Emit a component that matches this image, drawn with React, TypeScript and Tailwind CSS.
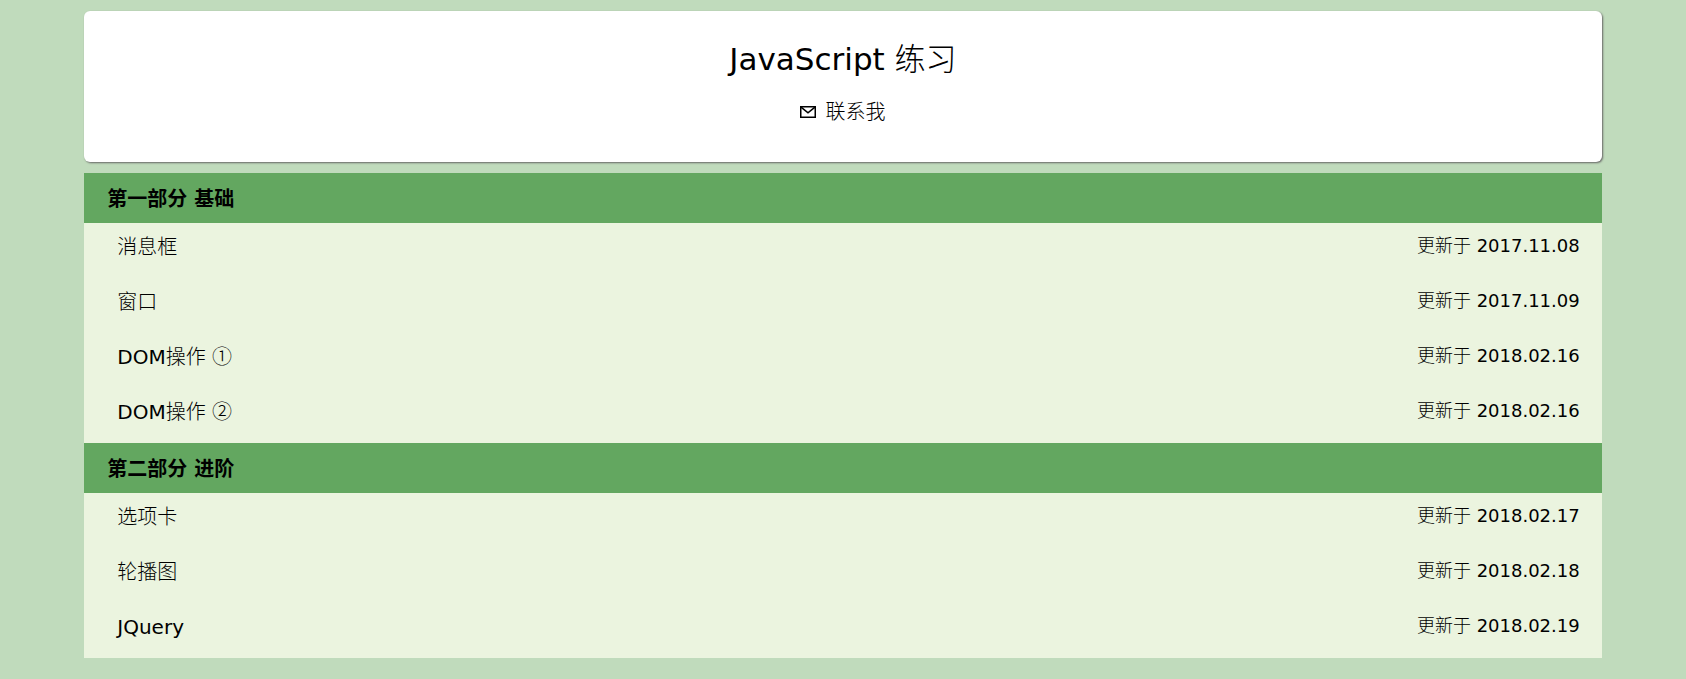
type Item = { title: string; mark?: string; date: string };
type Section = { heading: string; items: Item[] };

const sections: Section[] = [
  {
    heading: '第一部分 基础',
    items: [
      { title: '消息框', date: '2017.11.08' },
      { title: '窗口', date: '2017.11.09' },
      { title: 'DOM操作', mark: '①', date: '2018.02.16' },
      { title: 'DOM操作', mark: '②', date: '2018.02.16' },
    ],
  },
  {
    heading: '第二部分 进阶',
    items: [
      { title: '选项卡', date: '2018.02.17' },
      { title: '轮播图', date: '2018.02.18' },
      { title: 'JQuery', date: '2018.02.19' },
    ],
  },
];

function MailIcon() {
  return (
    <svg width="16" height="12" viewBox="0 0 16 12" fill="none" stroke="currentColor" aria-hidden="true">
      <rect x="0.75" y="0.75" width="14.5" height="10.5" strokeWidth="1.5" />
      <path d="M1 1.2 8 6.8 15 1.2" strokeWidth="1.6" />
    </svg>
  );
}

export default function App() {
  return (
    <div className="min-h-screen bg-[#c0dbbc] py-[11px] font-['DejaVu_Sans','Noto_Sans_CJK_SC_Light','Noto_Sans_CJK_SC',sans-serif] text-black">
      <div className="mx-auto flex w-[90%] flex-col gap-[11px]">
        <header className="flex flex-col items-center rounded-md bg-white pt-7 pb-9 shadow-[1px_1px_2px_#666]">
          <h1 className="text-[31px] leading-10">JavaScript 练习</h1>
          <a href="#contact" className="mt-[19px] flex items-center gap-[9px] text-xl leading-7">
            <MailIcon />
            联系我
          </a>
        </header>

        <main>
          {sections.map((section) => (
            <section key={section.heading}>
              <h2 className="bg-[#63a760] px-[23px] pt-3 pb-[10px] font-['DejaVu_Sans','Noto_Sans_CJK_SC',sans-serif] text-xl leading-7 font-bold">
                {section.heading}
              </h2>
              <ul className="bg-[#ebf4df]">
                {section.items.map((item) => (
                  <li
                    key={item.title + (item.mark ?? '')}
                    className="flex items-start justify-between pt-[10px] pr-[22px] pb-[17px] pl-[33px]"
                  >
                    <a href="#" className="text-xl leading-7">
                      {item.title}{' '}
                      {item.mark && (
                        <span className="font-['Noto_Sans_CJK_SC_Light','Noto_Sans_CJK_SC',sans-serif] leading-none">{item.mark}</span>
                      )}
                    </a>
                    <span className="text-[18px] leading-[26px]">更新于 {item.date}</span>
                  </li>
                ))}
              </ul>
            </section>
          ))}
        </main>
      </div>
    </div>
  );
}
